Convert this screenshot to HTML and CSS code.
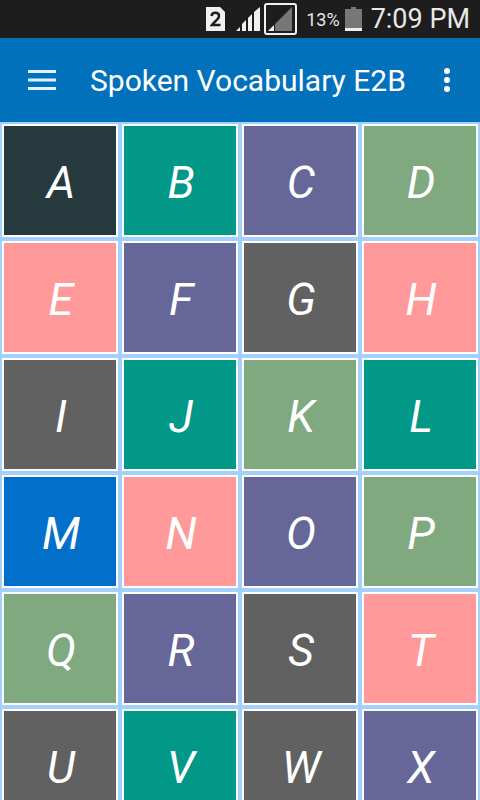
FILE: index.html
```html
<!DOCTYPE html>
<html lang="en">
<head>
    <meta charset="UTF-8">
    <meta name="viewport" content="width=device-width, initial-scale=1.0">
    <title>Spoken Vocabulary E2B</title>
    <link rel="stylesheet" href="styles.css">
</head>
<body>
    <div class="status-bar">
        <svg class="sim" width="19" height="24" viewBox="0 0 19 24" aria-hidden="true">
            <path d="M0 0h14l5 5v19H0z" fill="#f0f0f0"/>
            <path d="M5.500 9C6 4.500 13 4.500 13 9C13 12 9 14 6 18H14.500" fill="none" stroke="#1d1d1d" stroke-width="2.500"/>
        </svg>
        <svg class="signal" width="24" height="24" viewBox="0 0 24 24" aria-hidden="true">
            <path d="M0 24l4-4v4zM6 24v-7l4-4v11zM12 24V11l4-4v17zM18 24V5l6-5v24z" fill="#f0f0f0"/>
        </svg>
        <svg class="signal-box" width="33" height="32" viewBox="0 0 33 32" aria-hidden="true">
            <rect x="1" y="1" width="31" height="30" rx="2" fill="none" stroke="#f0f0f0" stroke-width="2"/>
            <path d="M11 28V21L28 4v24z" fill="#777"/>
            <path d="M4 28l6-6v6z" fill="#f0f0f0"/>
        </svg>
        <span class="percent">13%</span>
        <svg class="battery" width="17" height="24" viewBox="0 0 17 24" aria-hidden="true">
            <path d="M0 2h6V0h5v2h6v19H0z" fill="#777"/>
            <path d="M0 21h17v3H0z" fill="#f0f0f0"/>
        </svg>
        <span class="time">7:09 PM</span>
    </div>

    <header class="app-bar">
        <button class="icon-button" type="button" aria-label="Open menu">
            <svg width="28" height="20" viewBox="0 0 28 20" aria-hidden="true">
                <path d="M0 1.500h28M0 10h28M0 18.500h28" stroke="#e4f3fb" stroke-width="3"/>
            </svg>
        </button>
        <h1>Spoken Vocabulary E2B</h1>
        <button class="icon-button more" type="button" aria-label="More options">
            <svg width="6" height="24" viewBox="0 0 6 24" aria-hidden="true">
                <circle cx="3" cy="3" r="3" fill="#fff"/>
                <circle cx="3" cy="12" r="3" fill="#fff"/>
                <circle cx="3" cy="21" r="3" fill="#fff"/>
            </svg>
        </button>
    </header>

    <main class="letters">
        <button class="dark" type="button">A</button>
        <button class="teal" type="button">B</button>
        <button class="purple" type="button">C</button>
        <button class="green" type="button">D</button>
        <button class="pink" type="button">E</button>
        <button class="purple" type="button">F</button>
        <button class="gray" type="button">G</button>
        <button class="pink" type="button">H</button>
        <button class="gray" type="button">I</button>
        <button class="teal" type="button">J</button>
        <button class="green" type="button">K</button>
        <button class="teal" type="button">L</button>
        <button class="blue" type="button">M</button>
        <button class="pink" type="button">N</button>
        <button class="purple" type="button">O</button>
        <button class="green" type="button">P</button>
        <button class="green" type="button">Q</button>
        <button class="purple" type="button">R</button>
        <button class="gray" type="button">S</button>
        <button class="pink" type="button">T</button>
        <button class="gray" type="button">U</button>
        <button class="teal" type="button">V</button>
        <button class="gray" type="button">W</button>
        <button class="purple" type="button">X</button>
    </main>
</body>
</html>
```
FILE: styles.css
```css
* {
    box-sizing: border-box;
    margin: 0;
    padding: 0;
}

body {
    font-family: Roboto, sans-serif;
    background-color: #a3d1fc;
}

button {
    border: none;
    font-family: inherit;
    color: white;
    cursor: pointer;
}

.status-bar {
    display: flex;
    align-items: center;
    justify-content: flex-end;
    height: 38px;
    padding-right: 10px;
    background-color: #1d1d1d;
    color: #e8e8e8;
}

.signal {
    margin-left: 11px;
}

.signal-box {
    margin-left: 4px;
}

.percent {
    margin-left: 9px;
    font-size: 18px;
}

.battery {
    margin-left: 5px;
}

.time {
    margin-left: 9px;
    font-size: 27px;
}

.app-bar {
    display: flex;
    align-items: center;
    height: 84px;
    padding: 0 20px;
    background-color: #0271bc;
    color: white;
}

.app-bar h1 {
    flex: 1;
    margin-left: 26px;
    font-size: 30px;
    font-weight: 400;
    white-space: nowrap;
}

.icon-button {
    display: flex;
    align-items: center;
    justify-content: center;
    width: 44px;
    height: 48px;
    background: none;
}

.more {
    width: 26px;
}

.letters {
    display: grid;
    grid-template-columns: repeat(4, 1fr);
    gap: 4px;
    padding: 2px;
}

.letters button {
    height: 113px;
    padding: 4px 0 0 2px;
    border: 2px solid white;
    font-size: 45px;
    font-style: italic;
}

.dark {
    background-color: #263a3d;
}

.teal {
    background-color: #019888;
}

.purple {
    background-color: #676699;
}

.green {
    background-color: #80a980;
}

.pink {
    background-color: #ff999a;
}

.gray {
    background-color: #616161;
}

.blue {
    background-color: #0270cb;
}
```
